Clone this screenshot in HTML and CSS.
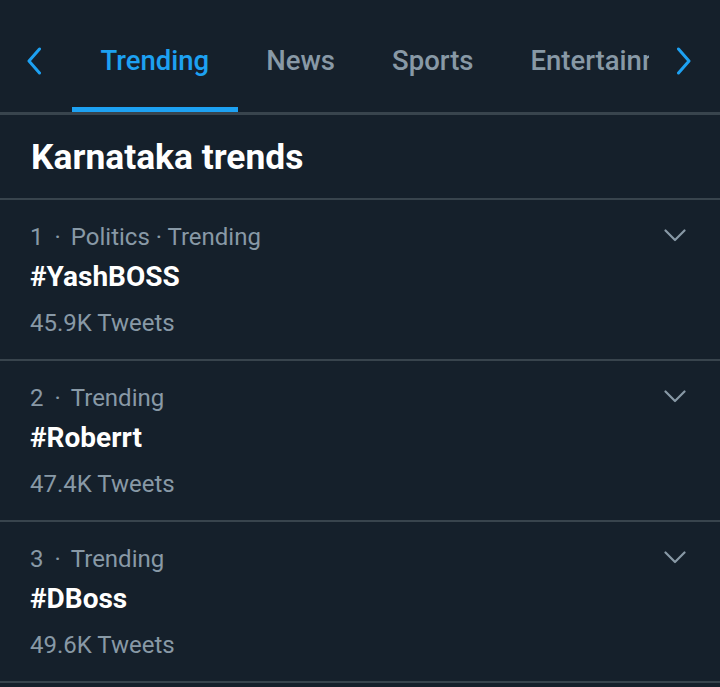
FILE: index.html
```html
<!DOCTYPE html>
<html>
<head>
<meta charset="utf-8">
<link rel="stylesheet" href="styles.css">
</head>
<body>
<div class="app">
  <header class="tabbar">
    <div class="nav nav-left">
      <svg width="16" height="28" viewBox="0 0 16 28"><path d="M13.5 2 L3 14 L13.5 26" fill="none" stroke="#1da1f2" stroke-width="3" stroke-linecap="round" stroke-linejoin="round"/></svg>
    </div>
    <nav class="tabs">
      <div class="tab active">Trending</div>
      <div class="tab">News</div>
      <div class="tab">Sports</div>
      <div class="tab">Entertainment</div>
    </nav>
    <div class="nav nav-right">
      <svg width="16" height="28" viewBox="0 0 16 28"><path d="M2.5 2 L13 14 L2.5 26" fill="none" stroke="#1da1f2" stroke-width="3" stroke-linecap="round" stroke-linejoin="round"/></svg>
    </div>
  </header>
  <h1 class="title">Karnataka trends</h1>
  <ul class="trends">
    <li class="trend">
      <div class="trend-body">
        <div class="meta">1<span class="dot">·</span>Politics · Trending</div>
        <div class="tag">#YashBOSS</div>
        <div class="count">45.9K Tweets</div>
      </div>
      <svg class="caret" width="22" height="13" viewBox="0 0 22 13"><path d="M1.5 1.5 L11 11 L20.5 1.5" fill="none" stroke="#8899a6" stroke-width="2.2" stroke-linecap="round" stroke-linejoin="round"/></svg>
    </li>
    <li class="trend">
      <div class="trend-body">
        <div class="meta">2<span class="dot">·</span>Trending</div>
        <div class="tag">#Roberrt</div>
        <div class="count">47.4K Tweets</div>
      </div>
      <svg class="caret" width="22" height="13" viewBox="0 0 22 13"><path d="M1.5 1.5 L11 11 L20.5 1.5" fill="none" stroke="#8899a6" stroke-width="2.2" stroke-linecap="round" stroke-linejoin="round"/></svg>
    </li>
    <li class="trend">
      <div class="trend-body">
        <div class="meta">3<span class="dot">·</span>Trending</div>
        <div class="tag">#DBoss</div>
        <div class="count">49.6K Tweets</div>
      </div>
      <svg class="caret" width="22" height="13" viewBox="0 0 22 13"><path d="M1.5 1.5 L11 11 L20.5 1.5" fill="none" stroke="#8899a6" stroke-width="2.2" stroke-linecap="round" stroke-linejoin="round"/></svg>
    </li>
  </ul>
</div>
</body>
</html>
```
FILE: styles.css
```css
* { box-sizing: border-box; }
html, body {
  margin: 0;
  padding: 0;
  background: #15202b;
}
body {
  font-family: Roboto, "Noto Sans", sans-serif;
  color: #ffffff;
  width: 720px;
  height: 687px;
  overflow: hidden;
}
.app {
  display: flex;
  flex-direction: column;
}
.tabbar {
  display: flex;
  height: 115px;
  border-bottom: 3px solid #38444d;
}
.nav {
  display: flex;
  align-items: flex-start;
  padding-top: 47px;
  flex: none;
}
.nav-left {
  width: 72px;
  padding-left: 26px;
}
.nav-right {
  width: 71px;
  padding-left: 27px;
}
.tabs {
  display: flex;
  flex: 1;
  overflow: hidden;
  white-space: nowrap;
}
.tab {
  flex: none;
  height: 112px;
  padding: 43px 28.5px 0;
  font-size: 27.5px;
  line-height: 36px;
  font-weight: 500;
  color: #8899a6;
}
.tab.active {
  color: #1da1f2;
  border-bottom: 5px solid #1da1f2;
}
.title {
  margin: 0;
  height: 85px;
  padding: 22px 0 0 31px;
  font-size: 35.4px;
  line-height: 40px;
  font-weight: 700;
  border-bottom: 2px solid #38444d;
}
.trends {
  list-style: none;
  margin: 0;
  padding: 0;
}
.trend {
  display: flex;
  justify-content: space-between;
  align-items: flex-start;
  height: 161px;
  padding: 21px 34px 0 30px;
  border-bottom: 2px solid #38444d;
}
.meta {
  font-size: 24px;
  line-height: 32px;
  color: #8899a6;
}
.dot {
  display: inline-block;
  padding: 0 10px 0 11px;
}
.tag {
  margin-top: 6px;
  font-size: 28px;
  line-height: 36px;
  font-weight: 700;
  color: #ffffff;
}
.count {
  margin-top: 12px;
  font-size: 24px;
  line-height: 32px;
  color: #8899a6;
}
.caret {
  margin-top: 8px;
}
```
